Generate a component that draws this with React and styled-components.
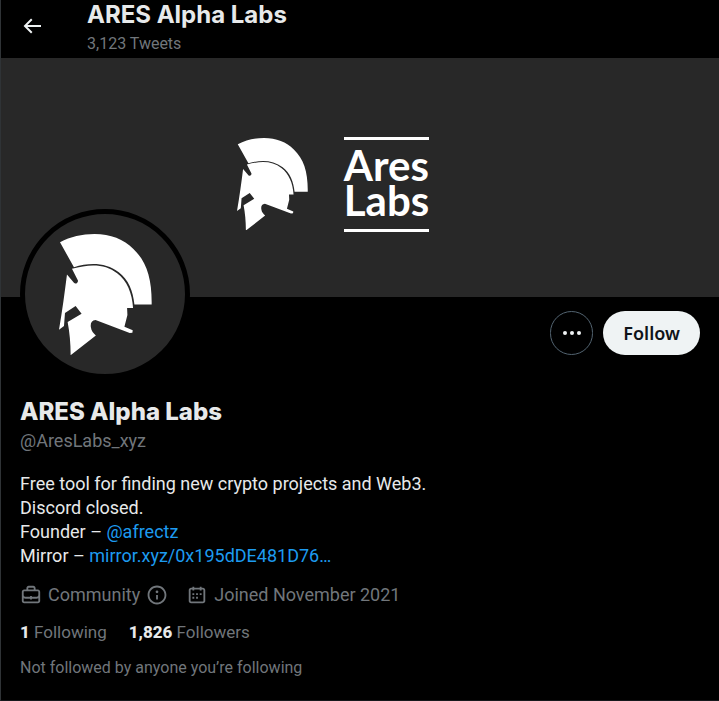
import React from 'react';
import styled, { createGlobalStyle } from 'styled-components';

const GlobalStyle = createGlobalStyle`
  * {
    box-sizing: border-box;
  }

  body {
    margin: 0;
    background: #000;
    color: #e7e9ea;
    font-family: Roboto, 'Liberation Sans', sans-serif;
    font-size: 18px;
    line-height: 24px;
  }
`;

const Column = styled.main`
  min-height: 100vh;
  border-left: 1px solid #2f3336;
  border-bottom: 1px solid #16181c;
`;

const TopBar = styled.header`
  display: flex;
  align-items: center;
  height: 58px;
  padding: 0 19px;
`;

const BackButton = styled.button`
  display: flex;
  align-items: center;
  width: 67px;
  height: 44px;
  margin-top: -6px;
  padding: 0;
  border: 0;
  background: none;
  color: #eff3f4;
  cursor: pointer;
`;

const Heading = styled.div`
  display: flex;
  flex-direction: column;
  height: 58px;
`;

const BarTitle = styled.h2`
  margin: 0;
  font-family: Inter, sans-serif;
  font-size: 24px;
  font-weight: 700;
  line-height: 30px;
`;

const TweetCount = styled.span`
  color: #71767b;
  font-size: 16px;
  line-height: 28px;
`;

const Banner = styled.div`
  display: flex;
  align-items: center;
  justify-content: center;
  gap: 36px;
  aspect-ratio: 3 / 1;
  padding: 13px 54px 0 0;
  background: #282828;
`;

const HelmetSvg = styled.svg`
  width: ${(props) => props.$width}px;
  fill: #fff;
`;

const Wordmark = styled.div`
  padding: 8px 0 11px;
  border-top: 3px solid #fff;
  border-bottom: 3px solid #fff;
  color: #fff;
  font-family: Lato, sans-serif;
  font-size: 42px;
  font-weight: 700;
  line-height: 35px;
`;

const Profile = styled.section`
  padding: 0 19px;
`;

const ProfileTop = styled.div`
  display: flex;
  align-items: flex-start;
  justify-content: space-between;
`;

const Avatar = styled.a`
  display: flex;
  align-items: center;
  justify-content: center;
  width: 170px;
  height: 170px;
  margin-top: -88px;
  border: 5px solid #000;
  border-radius: 50%;
  background: #282828;
`;

const Actions = styled.div`
  display: flex;
  gap: 10px;
  padding-top: 14px;
`;

const MoreButton = styled.button`
  display: flex;
  align-items: center;
  justify-content: center;
  width: 43px;
  height: 44px;
  padding: 0;
  border: 1px solid #536471;
  border-radius: 22px;
  background: none;
  color: #eff3f4;
  cursor: pointer;
`;

const FollowButton = styled.button`
  height: 44px;
  padding: 0 20px;
  border: 0;
  border-radius: 22px;
  background: #eff3f4;
  color: #0f1419;
  font-family: 'Noto Sans', sans-serif;
  font-size: 18px;
  font-weight: 600;
  cursor: pointer;
`;

const Name = styled.h1`
  margin: 18px 0 0;
  font-family: Inter, sans-serif;
  font-size: 24px;
  font-weight: 800;
  line-height: 30px;
`;

const Handle = styled.div`
  margin-top: 2px;
  color: #71767b;
`;

const Bio = styled.p`
  margin: 19px 0 0;
`;

const TextLink = styled.a`
  color: #1d9bf0;
  text-decoration: none;
`;

const Facts = styled.div`
  display: flex;
  gap: 18px;
  margin-top: 15px;
  color: #71767b;
`;

const Fact = styled.span`
  display: flex;
  align-items: center;
  gap: 6px;
`;

const Counts = styled.div`
  display: flex;
  gap: 22px;
  margin-top: 13px;
`;

const CountLink = styled.a`
  color: #71767b;
  font-size: 17px;
  text-decoration: none;

  strong {
    color: #e7e9ea;
    font-weight: 800;
  }
`;

const FollowedBy = styled.p`
  margin: 12px 0 0;
  color: #71767b;
  font-size: 16px;
`;

function Helmet({ width }) {
  return (
    <HelmetSvg $width={width} viewBox="145 101 280 365" aria-hidden="true">
      <path d="M148 126C180 109 214 101 252 101C300 101 340 117 369 146C409 184 425 236 424 313H372C368 272 354 238 325 216C286 187 238 186 190 201Z" />
      <path d="M184 206C238 190 285 191 320 219C350 242 365 278 368 324H350L351 345L342 380L367 391L366 398L358 399L255 360C243 361 239 370 241 382C242 393 249 400 256 407L180 466C180 430 177 398 171 366L213 341L195 318L163 339L160 378L145 389C155 331 162 278 169 223L190 248C195 253 203 248 202 241Z" />
    </HelmetSvg>
  );
}

function BackIcon() {
  return (
    <svg width="24" height="24" viewBox="0 0 24 24" fill="currentColor" aria-hidden="true">
      <path d="M7.414 13l5.043 5.04-1.414 1.42L3.586 12l7.457-7.46 1.414 1.42L7.414 11H21v2H7.414z" />
    </svg>
  );
}

function MoreIcon() {
  return (
    <svg width="24" height="24" viewBox="0 0 24 24" fill="currentColor" aria-hidden="true">
      <circle cx="5" cy="12" r="2" />
      <circle cx="12" cy="12" r="2" />
      <circle cx="19" cy="12" r="2" />
    </svg>
  );
}

function BriefcaseIcon() {
  return (
    <svg width="22" height="22" viewBox="0 0 24 24" fill="currentColor" aria-hidden="true">
      <path d="M19.5 6H17V4.5C17 3.12 15.88 2 14.5 2h-5C8.12 2 7 3.12 7 4.5V6H4.5C3.12 6 2 7.12 2 8.5v10C2 19.88 3.12 21 4.5 21h15c1.38 0 2.5-1.12 2.5-2.5v-10C22 7.12 20.88 6 19.5 6zM9 4.5c0-.28.23-.5.5-.5h5c.28 0 .5.22.5.5V6H9V4.5zm11 14c0 .28-.22.5-.5.5h-15c-.27 0-.5-.22-.5-.5v-3.04c.59.35 1.27.54 2 .54h5v1h2v-1h5c.73 0 1.41-.19 2-.54v3.04zm0-6.49c0 1.1-.9 1.99-2 1.99h-5v-1h-2v1H6c-1.1 0-2-.9-2-2V8.5c0-.28.23-.5.5-.5h15c.28 0 .5.22.5.5v3.51z" />
    </svg>
  );
}

function InfoIcon() {
  return (
    <svg width="22" height="22" viewBox="0 0 24 24" fill="currentColor" aria-hidden="true">
      <path d="M13.5 8.5c0 .83-.67 1.5-1.5 1.5s-1.5-.67-1.5-1.5S11.17 7 12 7s1.5.67 1.5 1.5zM13 17v-5h-2v5h2zm-1 5.25C6.34 22.25 1.75 17.66 1.75 12S6.34 1.75 12 1.75 22.25 6.34 22.25 12 17.66 22.25 12 22.25zM20.25 12c0-4.56-3.69-8.25-8.25-8.25S3.75 7.44 3.75 12s3.69 8.25 8.25 8.25 8.25-3.69 8.25-8.25z" />
    </svg>
  );
}

function CalendarIcon() {
  return (
    <svg width="22" height="22" viewBox="0 0 24 24" fill="currentColor" aria-hidden="true">
      <path d="M7 4V3h2v1h6V3h2v1h1.5C19.89 4 21 5.12 21 6.5v12c0 1.38-1.11 2.5-2.5 2.5h-13C4.12 21 3 19.88 3 18.5v-12C3 5.12 4.12 4 5.5 4H7zm0 2H5.5c-.27 0-.5.22-.5.5v12c0 .28.23.5.5.5h13c.28 0 .5-.22.5-.5v-12c0-.28-.22-.5-.5-.5H17v1h-2V6H9v1H7V6zm0 6h2v-2H7v2zm0 4h2v-2H7v2zm4-4h2v-2h-2v2zm0 4h2v-2h-2v2zm4-4h2v-2h-2v2z" />
    </svg>
  );
}

function App() {
  return (
    <>
      <GlobalStyle />
      <Column>
        <TopBar>
          <BackButton aria-label="Back">
            <BackIcon />
          </BackButton>
          <Heading>
            <BarTitle>ARES Alpha Labs</BarTitle>
            <TweetCount>3,123 Tweets</TweetCount>
          </Heading>
        </TopBar>
        <Banner>
          <Helmet width={71} />
          <Wordmark>
            Ares
            <br />
            Labs
          </Wordmark>
        </Banner>
        <Profile>
          <ProfileTop>
            <Avatar href="#photo" aria-label="Profile photo">
              <Helmet width={93} />
            </Avatar>
            <Actions>
              <MoreButton aria-label="More">
                <MoreIcon />
              </MoreButton>
              <FollowButton>Follow</FollowButton>
            </Actions>
          </ProfileTop>
          <Name>ARES Alpha Labs</Name>
          <Handle>@AresLabs_xyz</Handle>
          <Bio>
            Free tool for finding new crypto projects and Web3.
            <br />
            Discord closed.
            <br />
            Founder – <TextLink href="#afrectz">@afrectz</TextLink>
            <br />
            Mirror – <TextLink href="#mirror">mirror.xyz/0x195dDE481D76…</TextLink>
          </Bio>
          <Facts>
            <Fact>
              <BriefcaseIcon />
              Community
              <InfoIcon />
            </Fact>
            <Fact>
              <CalendarIcon />
              Joined November 2021
            </Fact>
          </Facts>
          <Counts>
            <CountLink href="#following">
              <strong>1</strong> Following
            </CountLink>
            <CountLink href="#followers">
              <strong>1,826</strong> Followers
            </CountLink>
          </Counts>
          <FollowedBy>Not followed by anyone you’re following</FollowedBy>
        </Profile>
      </Column>
    </>
  );
}

export default App;
